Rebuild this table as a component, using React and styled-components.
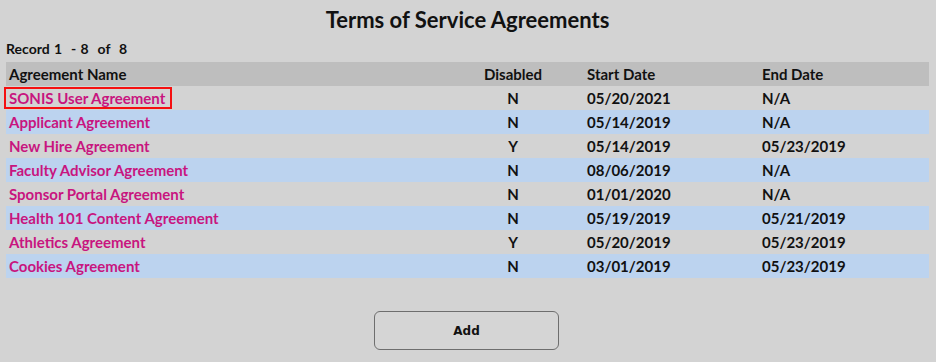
import React from 'react';
import styled, { createGlobalStyle } from 'styled-components';

const GlobalStyle = createGlobalStyle`
  html, body {
    margin: 0;
    padding: 0;
    background: #d3d3d3;
  }
  body {
    font-family: Lato, "Noto Sans", sans-serif;
    color: #111;
  }
`;

const agreements = [
  { name: 'SONIS User Agreement', disabled: 'N', start: '05/20/2021', end: 'N/A', selected: true },
  { name: 'Applicant Agreement', disabled: 'N', start: '05/14/2019', end: 'N/A' },
  { name: 'New Hire Agreement', disabled: 'Y', start: '05/14/2019', end: '05/23/2019' },
  { name: 'Faculty Advisor Agreement', disabled: 'N', start: '08/06/2019', end: 'N/A' },
  { name: 'Sponsor Portal Agreement', disabled: 'N', start: '01/01/2020', end: 'N/A' },
  { name: 'Health 101 Content Agreement', disabled: 'N', start: '05/19/2019', end: '05/21/2019' },
  { name: 'Athletics Agreement', disabled: 'Y', start: '05/20/2019', end: '05/23/2019' },
  { name: 'Cookies Agreement', disabled: 'N', start: '03/01/2019', end: '05/23/2019' },
];

const App = () => {
  return (
    <Page>
      <GlobalStyle />
      <Title>Terms of Service Agreements</Title>
      <RecordCount>Record 1&nbsp; - 8&nbsp; of&nbsp; 8</RecordCount>
      <Table>
        <thead>
          <HeadRow>
            <HeadCell>Agreement Name</HeadCell>
            <HeadCell $align="center">Disabled</HeadCell>
            <HeadCell>Start Date</HeadCell>
            <HeadCell>End Date</HeadCell>
          </HeadRow>
        </thead>
        <tbody>
          {agreements.map((a, i) => (
            <Row key={a.name} $striped={i % 2 === 1}>
              <Cell>
                <NameLink href="#" $selected={a.selected}>{a.name}</NameLink>
              </Cell>
              <Cell $align="center">{a.disabled}</Cell>
              <Cell>{a.start}</Cell>
              <Cell>{a.end}</Cell>
            </Row>
          ))}
        </tbody>
      </Table>
      <Actions>
        <AddButton type="button">Add</AddButton>
      </Actions>
    </Page>
  );
};

const Page = styled.div`
  width: 936px;
  height: 362px;
  padding: 8px 7px 0 6px;
  box-sizing: border-box;
`;

const Title = styled.h1`
  margin: 0;
  text-align: center;
  font-size: 22px;
  font-weight: 700;
  line-height: 24px;
  color: #111;
`;

const RecordCount = styled.div`
  margin-top: 9px;
  margin-bottom: 6px;
  font-size: 14px;
  font-weight: 700;
  line-height: 15px;
  word-spacing: 1px;
`;

const Table = styled.table`
  width: 100%;
  border-collapse: collapse;
  table-layout: fixed;
  font-size: 15px;
  font-weight: 700;
`;

const HeadRow = styled.tr`
  background: #bebebe;
  height: 24px;
`;

const HeadCell = styled.th`
  text-align: ${(p) => p.$align || 'left'};
  padding: 0 3px;
  font-weight: 700;

  &:nth-child(1) { width: 430px; }
  &:nth-child(2) { width: 136px; }
  &:nth-child(3) { width: 169px; }
`;

const Row = styled.tr`
  height: 24px;
  background: ${(p) => (p.$striped ? '#bcd3ef' : 'transparent')};
`;

const Cell = styled.td`
  text-align: ${(p) => p.$align || 'left'};
  padding: 0 3px;
`;

const NameLink = styled.a`
  color: #c8157f;
  text-decoration: none;
  display: inline-block;
  line-height: 18px;
  padding: 0 5px 0 3px;
  margin-left: -5px;
  border: 2px solid ${(p) => (p.$selected ? '#f50f0f' : 'transparent')};
`;

const Actions = styled.div`
  display: flex;
  justify-content: center;
  margin-top: 33px;
  padding-right: 2px;
`;

const AddButton = styled.button`
  width: 185px;
  height: 39px;
  border: 1px solid #6e6e6e;
  border-radius: 6px;
  background: #d5d5d5;
  font-family: "DejaVu Sans", sans-serif;
  font-size: 12px;
  font-weight: 700;
  color: #111;
  cursor: pointer;
`;

export default App;
